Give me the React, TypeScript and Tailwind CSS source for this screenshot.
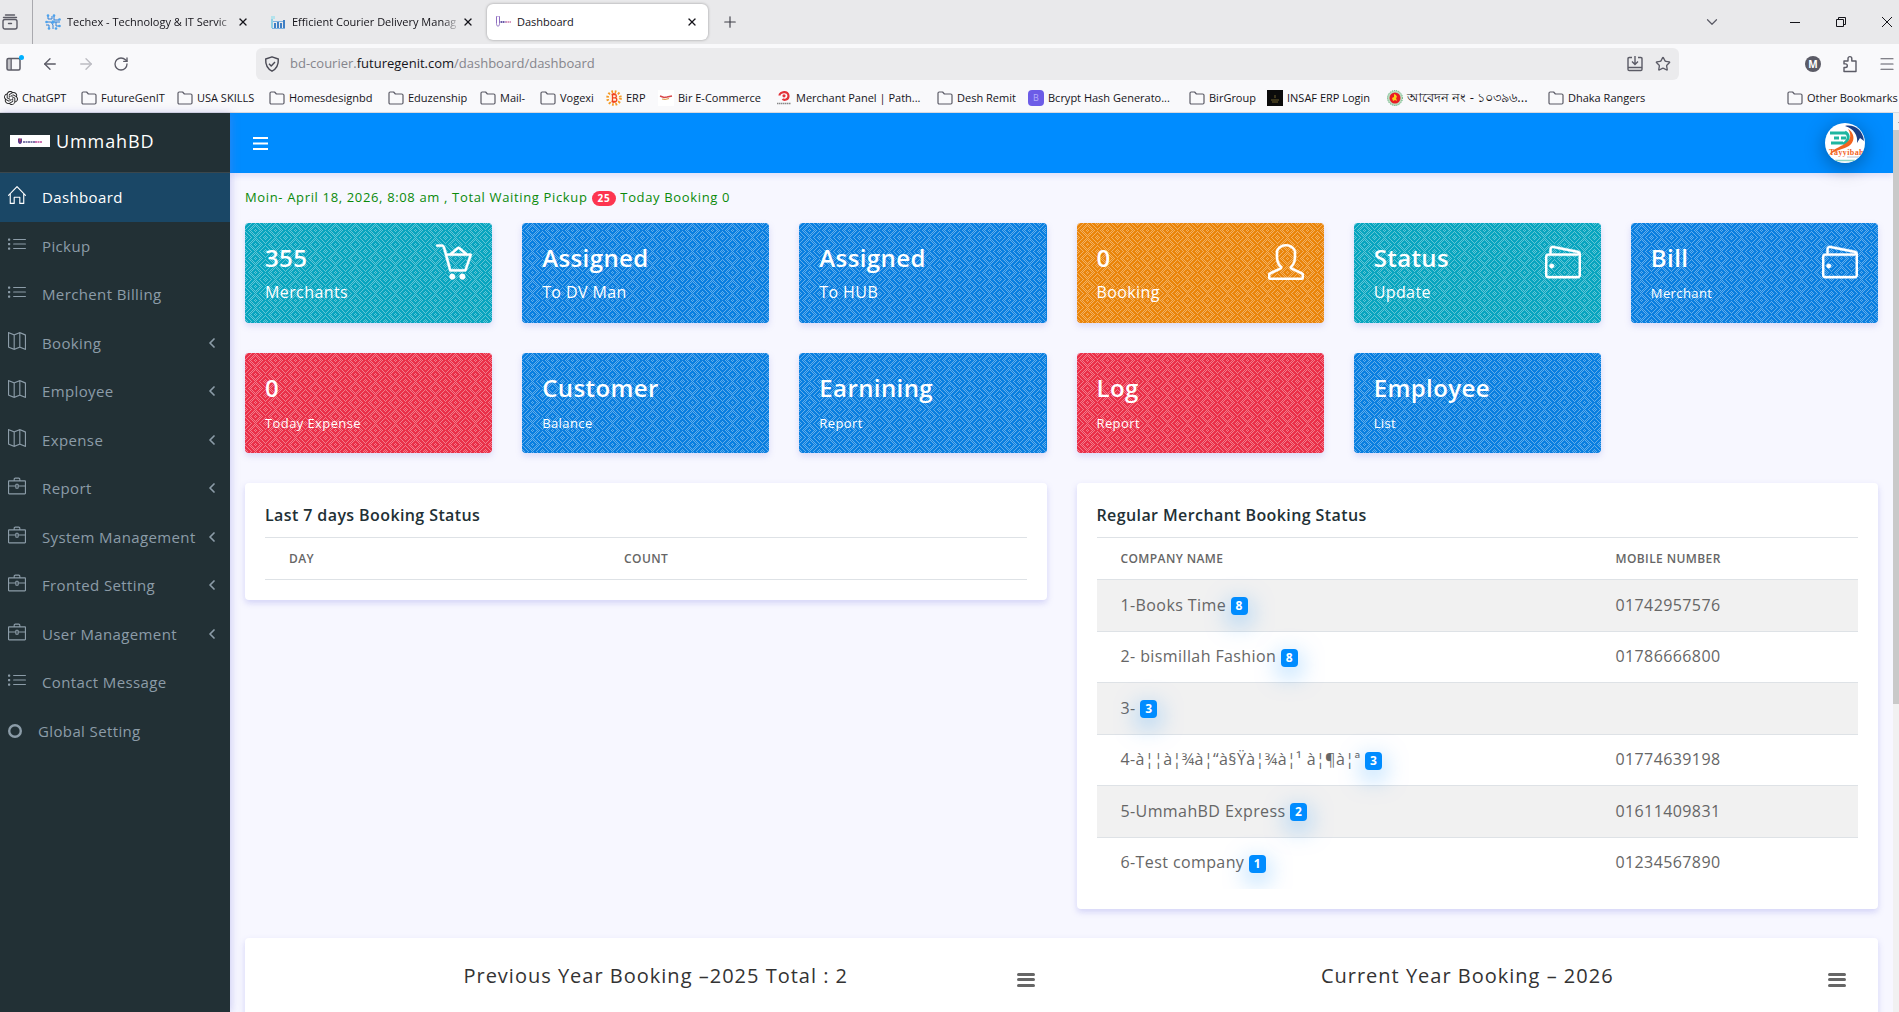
import type { ReactNode } from "react";
import { SlBasketLoaded, SlUser, SlWallet, SlHome, SlList, SlMap, SlBriefcase } from "react-icons/sl";
import { SiOpenai } from "react-icons/si";
import { ArrowLeft, ArrowRight, ChevronDown, ChevronLeft, Menu, Plus, RotateCw, Star, X } from "lucide-react";

/* ---------- browser chrome ---------- */

function FolderIcon() {
  return (
    <svg className="h-4 w-4" viewBox="0 0 16 16" fill="none" stroke="#5b5b66" strokeWidth="1.2" strokeLinejoin="round">
      <path d="M1 3.200C1 2.500 1.500 2 2.200 2h3.400l1.800 2h6.200c.8 0 1.400.5 1.400 1.200v7.600c0 .7-.5 1.200-1.200 1.200H2.200C1.500 14 1 13.500 1 12.800z" />
    </svg>
  );
}

function NetworkFavicon() {
  return (
    <svg className="h-4 w-4" viewBox="0 0 16 16" fill="none" stroke="#2f80d8" strokeWidth="1">
      <path d="M3 1v4h4V2M9 1v5h5M1 8h5l2 3v4M4 15v-4H1M8 8h7M11 8v4h4M11 15v-1" />
      <g fill="#4da3ee" stroke="none">
        <circle cx="3" cy="1.6" r="1.3" /><circle cx="9" cy="1.6" r="1.3" /><circle cx="14.5" cy="5.5" r="1.3" />
        <circle cx="1.5" cy="8" r="1.3" /><circle cx="4" cy="14.5" r="1.3" /><circle cx="8" cy="8" r="1.8" />
        <circle cx="14.5" cy="12" r="1.3" /><circle cx="11" cy="14.5" r="1.3" />
      </g>
    </svg>
  );
}

function CourierFavicon() {
  return (
    <svg className="h-4 w-4" viewBox="0 0 16 16">
      <path d="M1 2h4v3H1z" fill="#b5e3ec" />
      <path d="M1 5h2v9H1z" fill="#8fd0e6" />
      <path d="M4 9h2v5H4zM7 8h2v6H7zM10 9h2v5h-2zM13 6h2v8h-2z" fill="#3f7fc4" />
      <path d="M3 7h10v1H3zM2 14h13v1H2z" fill="#7fb2e0" />
    </svg>
  );
}

function ShieldFavicon() {
  return (
    <svg className="h-4 w-4" viewBox="0 0 16 16" fill="none">
      <path d="M1.500 2v7.500c0 1.500.5 2.300 1.500 3 1-.7 1.500-1.500 1.500-3V2" stroke="#8f6fc0" />
      <path d="M1.500 2.500h3" stroke="#c9b4e6" />
      <path d="M5.500 8h5" stroke="#6a5aa8" strokeWidth="2" strokeDasharray="1.500 .5" />
      <path d="M10.500 8H16" stroke="#d79ac0" strokeWidth="2" strokeDasharray="1.500 .5" />
    </svg>
  );
}

function BitcoinFavicon() {
  return (
    <svg className="h-4 w-4" viewBox="0 0 16 16" fill="none">
      <circle cx="8" cy="8" r="6.500" stroke="#f59a23" strokeWidth="2.600" strokeDasharray="1.700 1.700" />
      <circle cx="8" cy="8" r="5" fill="#fff3e0" />
      <path d="M5.500 4.500h3.200c2.200 0 2.200 3.300 0 3.300 2.800 0 2.800 3.700 0 3.700H5.500M6.500 4.500v7M6.500 7.800h2.200M7.200 3v1.500M9 3v1.500M7.200 11.500V13M9 11.500V13" stroke="#f0431e" strokeWidth="1.300" />
    </svg>
  );
}

function RibbonFavicon() {
  return (
    <svg className="h-4 w-4" viewBox="0 0 16 16" fill="none">
      <path fill="#fff" d="M0 0h16v16H0z" />
      <path d="M2 6l4 1.500 3-.5 5-1" stroke="#d8484a" strokeWidth="1.600" />
      <path d="M4 9l3 .5 4-1" stroke="#e0a050" strokeWidth="1.200" />
    </svg>
  );
}

function PathaoFavicon() {
  return (
    <svg className="h-4 w-4" viewBox="0 0 16 16" fill="none">
      <path d="M3.500 5.500C3.500 2 12.500 0 12.500 6c0 4-4.500 4.500-6 3" stroke="#e33239" strokeWidth="2.200" />
      <circle cx="8" cy="5.800" r="1.600" fill="#e33239" />
      <path d="M1 13.500h14" stroke="#888" strokeDasharray="1.500 .5" strokeWidth="1.500" />
    </svg>
  );
}

function LetterBFavicon() {
  return (
    <span className="flex h-4 w-4 items-center justify-center rounded-sm bg-[#6c5ce7] text-[9px] text-[#b7aefb]">B</span>
  );
}

function DarkFavicon() {
  return (
    <svg className="h-4 w-4" viewBox="0 0 16 16">
      <path fill="#0b0b0b" d="M0 0h16v16H0z" />
      <path d="M8 5v3M4 10h8M5 12h6" stroke="#6d5e2c" strokeWidth="1" />
    </svg>
  );
}

function SealFavicon() {
  return (
    <svg className="h-4 w-4" viewBox="0 0 16 16">
      <circle cx="8" cy="8" r="7.500" fill="#b9dcc0" stroke="#4fa86c" strokeDasharray="1 1" />
      <circle cx="8" cy="8" r="5.500" fill="#ea1c24" />
      <path d="M7 4l2 1 1 2-1 1 1 3-2-1-2 1-1-3 2-1z" fill="#f7d417" />
    </svg>
  );
}

type Tab = { title: string; icon: ReactNode; active?: boolean };

const tabs: Tab[] = [
  { title: "Techex - Technology & IT Servic", icon: <NetworkFavicon /> },
  { title: "Efficient Courier Delivery Manag", icon: <CourierFavicon /> },
  { title: "Dashboard", icon: <ShieldFavicon />, active: true },
];

function BrowserTab({ tab }: { tab: Tab }) {
  return (
    <div
      className={
        tab.active
          ? "flex h-9 w-[221px] items-center rounded-md bg-white px-2 shadow-[0_0_3px_rgba(0,0,0,0.35)]"
          : "flex h-9 w-[225px] items-center px-2"
      }
    >
      <span className="shrink-0">{tab.icon}</span>
      <a
        href="#tab"
        className={
          tab.active
            ? "ml-1.5 flex-1 whitespace-nowrap"
            : "ml-1.5 w-[168px] mask-r-from-90% whitespace-nowrap"
        }
      >
        {tab.title}
      </a>
      <button aria-label={`Close ${tab.title}`} className="flex h-4 w-4 shrink-0 items-center justify-center">
        <X className="h-3 w-3 text-[#15141a]" strokeWidth={2.6} />
      </button>
    </div>
  );
}

function TabStrip() {
  return (
    <div className="flex h-11 items-center bg-[#e9e9eb]">
      <div className="flex h-full w-[33px] items-center border-r border-[#a9a9ae]">
        <button aria-label="Recent tabs">
          <svg className="ml-0.5 h-4 w-4" viewBox="0 0 16 16" fill="none" stroke="#5b5b66" strokeWidth="1.400" strokeLinecap="round">
            <path d="M3.500 1h9M1.500 3.500h13" />
            <rect x="1" y="5.500" width="14" height="9.500" rx="2" />
            <path d="M6.500 9.500h3" />
          </svg>
        </button>
      </div>
      <div className="ml-1 flex items-center">
        {tabs.map((tab) => (
          <BrowserTab key={tab.title} tab={tab} />
        ))}
      </div>
      <button aria-label="New tab" className="ml-1.5 flex h-8 w-8 items-center justify-center">
        <Plus className="h-[18px] w-[18px] text-[#3e3e47]" strokeWidth={1.5} />
      </button>
      <div className="ml-auto flex items-center text-[#15141a]">
        <button aria-label="List all tabs" className="mr-[37px] flex w-[46px] justify-center">
          <ChevronDown className="h-[18px] w-[18px] text-[#5b5b66]" strokeWidth={1.6} />
        </button>
        <button aria-label="Minimize" className="flex w-[46px] justify-center">
          <svg className="h-3 w-3" viewBox="0 0 12 12" stroke="currentColor"><path d="M1 6.500h10" /></svg>
        </button>
        <button aria-label="Restore" className="flex w-[46px] justify-center">
          <svg className="h-3 w-3" viewBox="0 0 12 12" fill="none" stroke="currentColor">
            <path d="M1.500 3.500h7v7h-7zM3.500 3.500v-2h7v7h-2" />
          </svg>
        </button>
        <button aria-label="Close window" className="flex w-[35px] justify-end pr-1.5">
          <svg className="h-3 w-3" viewBox="0 0 12 12" stroke="currentColor"><path d="M1 1l10 10M11 1L1 11" /></svg>
        </button>
      </div>
    </div>
  );
}

function Toolbar() {
  return (
    <div className="flex h-10 items-center bg-[#f9f9fb] text-[#5b5b66]">
      <button aria-label="Sidebars" className="ml-[5px]">
        <svg className="h-5 w-5" viewBox="0 0 20 20" fill="none">
          <rect x="2" y="4.500" width="13" height="11.500" rx="1.500" stroke="#5b5b66" strokeWidth="1.500" />
          <path d="M2 5h4v10H2z" fill="#5b5b66" opacity=".35" />
          <path d="M6.200 4.500V16" stroke="#5b5b66" strokeWidth="1.200" />
          <circle cx="16.500" cy="3.500" r="2.500" fill="#00b0ff" />
        </svg>
      </button>
      <button aria-label="Back" className="ml-4"><ArrowLeft className="h-[18px] w-[18px]" strokeWidth={1.8} /></button>
      <button aria-label="Forward" className="ml-[18px]"><ArrowRight className="h-[18px] w-[18px] text-[#bcbcc2]" strokeWidth={1.8} /></button>
      <button aria-label="Reload" className="ml-[18px]"><RotateCw className="h-4 w-4" strokeWidth={2} /></button>
      <div className="mr-[126px] ml-[127px] flex h-8 flex-1 items-center rounded-md bg-[#ebebed] px-2">
        <svg className="h-4 w-4" viewBox="0 0 16 16" fill="none" stroke="#4a4a55" strokeWidth="1.400" strokeLinejoin="round">
          <path d="M8 .8l6.300 2.200c.3 5.500-1.800 9.800-6.300 12.200C3.500 12.800 1.400 8.500 1.700 3z" />
          <path d="M5 7.800l2.200 2.200L11 6" />
        </svg>
        <a href="#address" className="ml-2.5 flex-1 text-[13px] text-[#85858c]">
          bd-courier.<span className="text-[#15141a]">futuregenit.com</span>/dashboard/dashboard
        </a>
        <button aria-label="Save page">
          <svg className="h-4 w-4" viewBox="0 0 16 16" fill="none" stroke="#5b5b66" strokeWidth="1.400">
            <path d="M5 1.500H2.200C1.500 1.500 1 2 1 2.700v10.600c0 .7.5 1.200 1.200 1.200h11.600c.7 0 1.200-.5 1.200-1.200V2.700c0-.7-.5-1.200-1.200-1.200H11M1 11.500h14M8 0v8M5 5.500L8 8.500l3-3" />
          </svg>
        </button>
        <button aria-label="Bookmark this page" className="ml-3"><Star className="h-4 w-4" strokeWidth={2} /></button>
      </div>
      <button aria-label="Account" className="flex h-4 w-4 items-center justify-center rounded-full bg-[#5b5b66] text-[10px] font-bold text-white">M</button>
      <button aria-label="Extensions" className="ml-5">
        <svg className="h-[18px] w-[18px]" viewBox="0 0 18 18" fill="none" stroke="#5b5b66" strokeWidth="1.400" strokeLinejoin="round">
          <path d="M3 16.500v-4h1.500a1.800 1.800 0 0 0 0-3.600H3V6h4V3.500a1.900 1.900 0 0 1 3.800 0V6H15v10.500z" />
        </svg>
      </button>
      <button aria-label="Application menu" className="mr-[3px] ml-[19px]"><Menu className="h-[18px] w-[18px]" strokeWidth={1.6} /></button>
    </div>
  );
}

const bookmarks: { label: string; icon?: ReactNode; width: string }[] = [
  { label: "ChatGPT", icon: <SiOpenai className="h-3.5 w-3.5 text-[#222]" />, width: "w-[77px]" },
  { label: "FutureGenIT", width: "w-[96px]" },
  { label: "USA SKILLS", width: "w-[92px]" },
  { label: "Homesdesignbd", width: "w-[119px]" },
  { label: "Eduzenship", width: "w-[92px]" },
  { label: "Mail-", width: "w-[60px]" },
  { label: "Vogexi", width: "w-[66px]" },
  { label: "ERP", icon: <BitcoinFavicon />, width: "w-[52px]" },
  { label: "Bir E-Commerce", icon: <RibbonFavicon />, width: "w-[118px]" },
  { label: "Merchant Panel | Path...", icon: <PathaoFavicon />, width: "w-[161px]" },
  { label: "Desh Remit", width: "w-[91px]" },
  { label: "Bcrypt Hash Generato...", icon: <LetterBFavicon />, width: "w-[161px]" },
  { label: "BirGroup", width: "w-[78px]" },
  { label: "INSAF ERP Login", icon: <DarkFavicon />, width: "w-[120px]" },
  { label: "আবেদন নং - ১০৩৯৬...", icon: <SealFavicon />, width: "w-[161px] text-[13px]" },
  { label: "Dhaka Rangers", width: "w-[110px]" },
];

function Bookmark({ label, icon, width }: { label: string; icon?: ReactNode; width: string }) {
  return (
    <a href="#bookmark" className={`flex shrink-0 items-center gap-1 whitespace-nowrap ${width}`}>
      {icon ?? <FolderIcon />}
      {label}
    </a>
  );
}

function BookmarksBar() {
  return (
    <div className="flex h-[29px] items-center border-b border-[#dcdce0] bg-[#f9f9fb] pl-1">
      {bookmarks.map((b) => (
        <Bookmark key={b.label} {...b} />
      ))}
      <div className="ml-auto"><Bookmark label="Other Bookmarks" width="w-[112px]" /></div>
    </div>
  );
}

/* ---------- sidebar ---------- */

const menu: { label: string; icon: ReactNode; sub?: boolean; active?: boolean }[] = [
  { label: "Dashboard", icon: <SlHome />, active: true },
  { label: "Pickup", icon: <SlList /> },
  { label: "Merchent Billing", icon: <SlList /> },
  { label: "Booking", icon: <SlMap />, sub: true },
  { label: "Employee", icon: <SlMap />, sub: true },
  { label: "Expense", icon: <SlMap />, sub: true },
  { label: "Report", icon: <SlBriefcase />, sub: true },
  { label: "System Management", icon: <SlBriefcase />, sub: true },
  { label: "Fronted Setting", icon: <SlBriefcase />, sub: true },
  { label: "User Management", icon: <SlBriefcase />, sub: true },
  { label: "Contact Message", icon: <SlList /> },
];

function Sidebar() {
  return (
    <aside className="z-10 flex w-[230px] shrink-0 flex-col bg-[#223035] text-[15px] tracking-wide text-[#8c9ca8] shadow-[1px_0_8px_rgba(120,120,220,0.35)]">
      <a href="#home" className="flex h-[60px] items-center gap-1.5 border-b border-[#3b474c] pb-1 pl-2.5 text-lg tracking-wider text-white">
        <svg className="h-3 w-10 bg-white" viewBox="0 0 40 12">
          <path d="M8 3.500h4v3c0 1.500-1 2.500-2 2.500s-2-1-2-2.500z" fill="#5b3a8c" />
          <path d="M9.500 3l1.500 2-1.500 2z" fill="#e0413a" />
          <path d="M13 7h12" stroke="#55508f" strokeWidth="1.500" strokeDasharray="2 .5" />
          <path d="M25 7h7" stroke="#c04a9a" strokeWidth="1.500" strokeDasharray="2 .5" />
        </svg>
        UmmahBD
      </a>
      <nav>
        <ul className="grid h-[582px] auto-rows-fr">
          {menu.map((item) => (
            <li key={item.label}>
              <a
                href="#menu"
                className={
                  item.active
                    ? "flex h-full items-center bg-[#1a4766] pr-2.5 pl-2 text-white"
                    : "flex h-full items-center pr-2.5 pl-2"
                }
              >
                <span className="mr-4 pb-1 text-lg">{item.icon}</span>
                <span className="flex-1 whitespace-nowrap">{item.label}</span>
                {item.sub && <ChevronLeft className="h-4 w-4 shrink-0" strokeWidth={2.6} />}
              </a>
            </li>
          ))}
          <li>
            <a href="#menu" className="flex h-full items-center gap-4 pl-2">
              <svg className="h-3.5 w-3.5" viewBox="0 0 14 14" fill="none" stroke="currentColor" strokeWidth="2.400">
                <circle cx="7" cy="7" r="5.800" />
              </svg>
              Global Setting
            </a>
          </li>
        </ul>
      </nav>
    </aside>
  );
}

/* ---------- stat cards ---------- */

/* 20x14 tile: a checkerboard of light pixels broken by small diamonds and the zigzags between them. */
const tile = (() => {
  let d = "";
  for (let y = 0; y < 14; y++) {
    for (let x = 0; x < 20; x++) {
      if ((x + y) % 2) continue;
      const corner = Math.min(x, 20 - x) + Math.min(y, 14 - y);
      const middle = Math.abs(x - 10) + Math.abs(y - 7);
      if (corner === 4 || corner === 8 || middle === 3) continue;
      d += `M${x} ${y}h1v1h-1z`;
    }
  }
  return d;
})();

type Card = { title: string; text: string; color: string; icon?: ReactNode; small?: boolean };

const cyan = "bg-[#08a5bf]";
const blue = "bg-[#0a7fe0]";
const orange = "bg-[#ea850b]";
const red = "bg-[#ea3049]";

const cards: Card[] = [
  { title: "355", text: "Merchants", color: cyan, icon: <SlBasketLoaded /> },
  { title: "Assigned", text: "To DV Man", color: blue },
  { title: "Assigned", text: "To HUB", color: blue },
  { title: "0", text: "Booking", color: orange, icon: <SlUser /> },
  { title: "Status", text: "Update", color: cyan, icon: <SlWallet /> },
  { title: "Bill", text: "Merchant", color: blue, icon: <SlWallet />, small: true },
  { title: "0", text: "Today Expense", color: red, small: true },
  { title: "Customer", text: "Balance", color: blue, small: true },
  { title: "Earnining", text: "Report", color: blue, small: true },
  { title: "Log", text: "Report", color: red, small: true },
  { title: "Employee", text: "List", color: blue, small: true },
];

function StatCard({ card }: { card: Card }) {
  return (
    <a
      href="#card"
      className={`relative flex min-h-[100px] justify-between overflow-hidden rounded px-5 pt-[19px] text-white shadow-[0_3px_6px_rgba(130,130,220,0.25)] ${card.color}`}
    >
      <svg className="absolute inset-0 h-full w-full" aria-hidden="true" shapeRendering="crispEdges">
        <rect width="100%" height="100%" fill="url(#weave)" />
      </svg>
      <div className="relative">
        <h4 className="text-2xl font-semibold">{card.title}</h4>
        <p className={card.small ? "mt-[7px] text-[13px] leading-6" : "mt-1.5 text-base"}>{card.text}</p>
      </div>
      {card.icon && <span className="relative stroke-white stroke-12 pt-0.5 text-4xl [&>svg]:stroke-[12]">{card.icon}</span>}
    </a>
  );
}

/* ---------- tables ---------- */

const merchants = [
  { name: "1-Books Time", count: 8, mobile: "01742957576" },
  { name: "2- bismillah Fashion", count: 8, mobile: "01786666800" },
  { name: "3-", count: 3, mobile: "" },
  { name: "4-à¦¦à¦¾à¦“à§Ÿà¦¾à¦¹ à¦¶à¦ª", count: 3, mobile: "01774639198" },
  { name: "5-UmmahBD Express", count: 2, mobile: "01611409831" },
  { name: "6-Test company", count: 1, mobile: "01234567890" },
];

function Panel({ title, children }: { title: string; children: ReactNode }) {
  return (
    <section className="rounded bg-white p-5 shadow-[0_3px_6px_rgba(130,130,230,0.3)]">
      <h5 className="mb-2.5 text-base font-semibold text-[#223035]">{title}</h5>
      {children}
    </section>
  );
}

function HeadRow({ first, second, width }: { first: string; second: string; width: string }) {
  return (
    <thead>
      <tr className="h-[42px] border-y border-[#dee2e6] text-left text-xs text-[#666]">
        <th className={`pl-6 font-semibold ${width}`}>{first}</th>
        <th className="pl-6 font-semibold">{second}</th>
      </tr>
    </thead>
  );
}

function ChartHeader({ title }: { title: string }) {
  return (
    <div className="grid grid-cols-[30px_1fr_30px] items-center">
      <h5 className="col-start-2 text-center text-xl tracking-wider text-[#333]">{title}</h5>
      <button aria-label="Chart menu" className="mt-2 flex h-4 w-[18px] flex-col justify-between py-px">
        <span className="h-[3px] w-full rounded-full bg-[#666]" />
        <span className="h-[3px] w-full rounded-full bg-[#666]" />
        <span className="h-[3px] w-full rounded-full bg-[#666]" />
      </button>
    </div>
  );
}

function TopBar() {
  return (
    <header className="flex h-[60px] shrink-0 items-center justify-between bg-[#008cff] pr-7 pl-[21px] shadow-[0_3px_6px_rgba(130,130,220,0.2)]">
      <button aria-label="Toggle menu" className="text-white">
        <svg className="h-5 w-5" viewBox="0 0 20 20" stroke="currentColor" strokeWidth="2">
          <path d="M2 5h15M2 10.500h15M2 16h15" />
        </svg>
      </button>
      <button aria-label="Profile" className="h-10 w-10 rounded-full bg-white shadow-[0_4px_20px_rgba(0,0,0,0.35)]">
        <svg className="h-10 w-10 rounded-full" viewBox="0 0 40 40" fill="none">
          <path d="M20 3c9-2 18 4 19 15l-4-3-3 5c1-8-3-14-12-17z" fill="#1c3f86" />
          <path d="M5 10h16M9 15h5M16 15h5M6 20h12" stroke="#1fb5a0" strokeWidth="3" />
          <path d="M20 9c5 3 4 9-2 12" stroke="#1fb5a0" strokeWidth="3" />
          <path d="M23 6c7 4 8 14-1 18-6 3-11 3-18 8 3-5 8-7 14-10s10-8 5-16z" fill="#f2641f" />
          <text x="4" y="32" fill="#f2641f" fontFamily="Liberation Serif, serif" fontWeight="bold" fontSize="8">Tayyibah</text>
          <path d="M22 34h12" stroke="#b9c2d0" />
          <path d="M10 37.500h20" stroke="#8fd8c6" strokeWidth="1.500" />
        </svg>
      </button>
    </header>
  );
}

export default function App() {
  return (
    <div className="flex h-screen flex-col overflow-hidden bg-[#f7f7ff] font-['Open_Sans','Noto_Sans',sans-serif] text-[11px] text-[#15141a]">
      <svg className="absolute h-0 w-0" aria-hidden="true">
        <pattern id="weave" width="20" height="14" patternUnits="userSpaceOnUse">
          <path d={tile} fill="#fff" fillOpacity="0.36" />
        </pattern>
      </svg>
      <div className="shrink-0">
        <TabStrip />
        <Toolbar />
        <BookmarksBar />
      </div>
      <div className="flex min-h-0 flex-1">
        <Sidebar />
        <div className="flex min-w-0 flex-1 flex-col text-base tracking-wide text-[#666]">
          <TopBar />
          <main className="min-h-0 flex-1 overflow-hidden px-[15px] pt-3.5">
            <p className="mb-4 text-[13px] leading-5 tracking-wider text-[#0a8a0a]">
              Moin- April 18, 2026, 8:08 am , Total Waiting Pickup{" "}
              <span className="inline-block rounded-full bg-[#fd3550] px-1.5 text-[10px] leading-[15px] font-bold text-white">25</span>{" "}
              Today Booking 0
            </p>
            <div className="grid grid-cols-6 gap-[30px]">
              {cards.map((card, i) => (
                <StatCard key={i} card={card} />
              ))}
            </div>
            <div className="mt-[30px] grid grid-cols-2 items-start gap-[30px]">
              <Panel title="Last 7 days Booking Status">
                <table className="w-full">
                  <HeadRow first="DAY" second="COUNT" width="w-[44%]" />
                </table>
              </Panel>
              <Panel title="Regular Merchant Booking Status">
                <div className="overflow-hidden">
                  <table className="w-full">
                    <HeadRow first="COMPANY NAME" second="MOBILE NUMBER" width="w-[65%]" />
                    <tbody>
                      {merchants.map((m) => (
                        <tr key={m.name} className="h-[51px] border-b border-[#dee2e6] last:border-b-0 odd:h-[52px] odd:bg-[#f1f1f1]">
                          <td className="pb-0.5 pl-6">
                            {m.name}{" "}
                            <span className="inline-block rounded bg-[#008cff] px-[5px] align-middle text-xs leading-[18px] font-bold text-white shadow-[0_7px_24px_rgba(0,140,255,0.5)]">
                              {m.count}
                            </span>
                          </td>
                          <td className="pb-0.5 pl-6">{m.mobile}</td>
                        </tr>
                      ))}
                    </tbody>
                  </table>
                </div>
              </Panel>
            </div>
            <section className="mt-[29px] grid min-h-[400px] grid-cols-2 items-start gap-[30px] rounded bg-white p-5 pt-6 shadow-[0_3px_6px_rgba(130,130,230,0.3)]">
              <ChartHeader title="Previous Year Booking –2025 Total : 2" />
              <ChartHeader title="Current Year Booking – 2026" />
            </section>
          </main>
        </div>
        <div className="w-1.5 shrink-0 bg-[#f1f1f1]">
          <svg className="h-[17px] w-1.5" viewBox="0 0 6 17"><path d="M5 10l4-4v4z" fill="#505050" /></svg>
          <div className="h-[574px] bg-[#c9c9c9]" />
        </div>
      </div>
    </div>
  );
}
